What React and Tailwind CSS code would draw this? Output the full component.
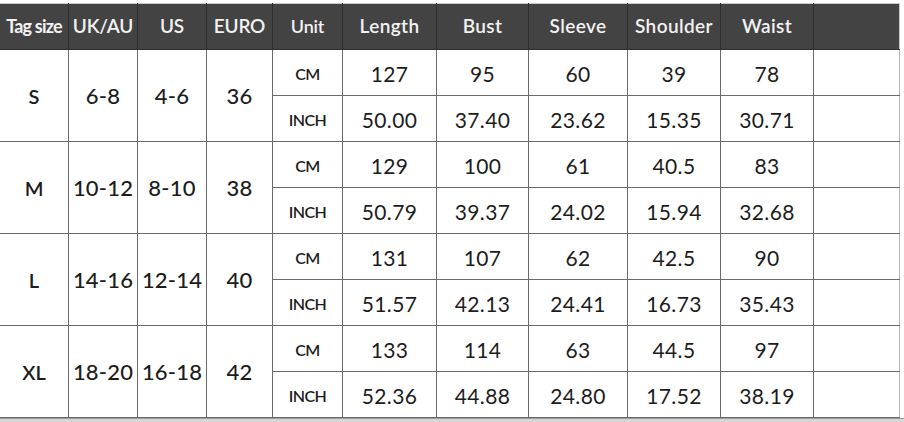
const headers = ["Tag size", "UK/AU", "US", "EURO", "Unit", "Length", "Bust", "Sleeve", "Shoulder", "Waist", ""];
const widths = [69, 69, 69, 66, 70, 94, 92, 99, 93, 93, 86];

const sizes = [
  { tag: "S", uk: "6-8", us: "4-6", eu: "36", cm: ["127", "95", "60", "39", "78"], inch: ["50.00", "37.40", "23.62", "15.35", "30.71"] },
  { tag: "M", uk: "10-12", us: "8-10", eu: "38", cm: ["129", "100", "61", "40.5", "83"], inch: ["50.79", "39.37", "24.02", "15.94", "32.68"] },
  { tag: "L", uk: "14-16", us: "12-14", eu: "40", cm: ["131", "107", "62", "42.5", "90"], inch: ["51.57", "42.13", "24.41", "16.73", "35.43"] },
  { tag: "XL", uk: "18-20", us: "16-18", eu: "42", cm: ["133", "114", "63", "44.5", "97"], inch: ["52.36", "44.88", "24.80", "17.52", "38.19"] },
];

const cell = "border border-[#6b6b6b] text-center align-middle p-0 whitespace-nowrap";
const unit = `${cell} text-[16px] font-semibold tracking-[-0.6px] pt-[2px]`;
const num = `${cell} text-[21px] tracking-[0.4px] pt-[2px]`;
const big = `${cell} text-[22px] font-medium tracking-[0.2px]`;

function headClass(i) {
  if (i === 0) return "text-[18px] font-bold tracking-[-0.8px]";
  if (i === 4) return "text-[18px] font-semibold tracking-[-0.2px]";
  if (i < 4) return "text-[19px] font-semibold tracking-[-0.2px]";
  return "text-[19px] font-semibold tracking-[0.4px]";
}

export default function App() {
  return (
    <div className="w-[904px] h-[422px] bg-white overflow-hidden text-[#1c1c1c]" style={{ fontFamily: "Lato, 'Noto Sans', sans-serif" }}>
      <div className="h-[3px] bg-white" />
      <table className="table-fixed border-collapse w-[901px] -ml-px border-t border-[#c8c8c8]">
        <colgroup>
          {widths.map((w, i) => (
            <col key={i} style={{ width: w }} />
          ))}
        </colgroup>
        <thead>
          <tr className="h-[46px] bg-[#434343] text-[#f2f2f2]">
            {headers.map((h, i) => (
              <th
                key={i}
                className={`border border-[#2e2e2e] border-t-[#c8c8c8] p-0 text-center align-middle whitespace-nowrap ${headClass(i)} ${
                  i === 10 ? "border-r-[#c8c8c8]" : ""
                }`}
              >
                {h}
              </th>
            ))}
          </tr>
        </thead>
        <tbody>
          {sizes.map((s) => (
            <SizeRows key={s.tag} s={s} />
          ))}
        </tbody>
      </table>
      <div className="h-[6px] bg-[#d6d6d6] border-t border-[#9a9a9a]" />
    </div>
  );
}

function SizeRows({ s }) {
  return (
    <>
      <tr className="h-[46px]">
        <td rowSpan={2} className={`${cell} text-[20px] font-semibold`}>{s.tag}</td>
        <td rowSpan={2} className={big}>{s.uk}</td>
        <td rowSpan={2} className={big}>{s.us}</td>
        <td rowSpan={2} className={big}>{s.eu}</td>
        <td className={unit}>CM</td>
        {s.cm.map((v, i) => (
          <td key={i} className={num}>{v}</td>
        ))}
        <td className={`${cell} border-r-[#b5b5b5]`} />
      </tr>
      <tr className="h-[46px]">
        <td className={unit}>INCH</td>
        {s.inch.map((v, i) => (
          <td key={i} className={num}>{v}</td>
        ))}
        <td className={`${cell} border-r-[#b5b5b5]`} />
      </tr>
    </>
  );
}
